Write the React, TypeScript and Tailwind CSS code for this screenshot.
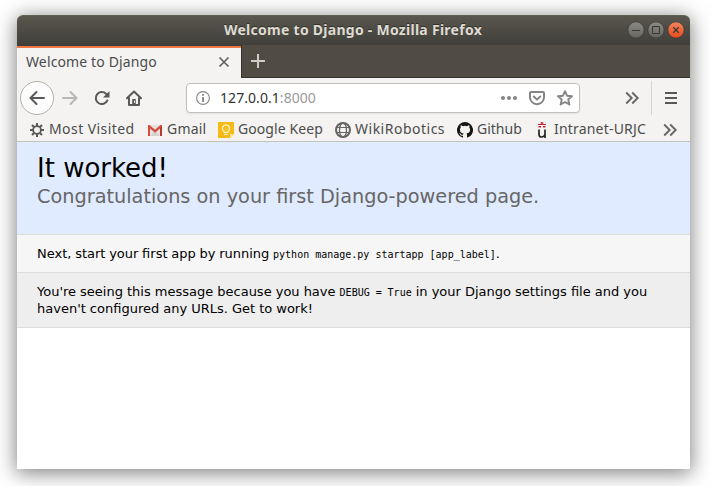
import React from "react";

function Icon({ size = 16, children }: { size?: number; children: React.ReactNode }) {
  return (
    <svg
      width={size}
      height={size}
      viewBox="0 0 16 16"
      fill="none"
      stroke="currentColor"
      strokeWidth="2"
      strokeLinecap="round"
      strokeLinejoin="round"
      className="block shrink-0"
    >
      {children}
    </svg>
  );
}

const Chevrons = () => (
  <Icon>
    <path d="M2.200 2.500 7.700 8l-5.500 5.500M8.200 2.500l5.500 5.500-5.500 5.500" stroke="#686765" strokeWidth="1.900" strokeLinecap="butt" strokeLinejoin="miter" />
  </Icon>
);

function TitleBar() {
  return (
    <div className="relative flex h-[30px] shrink-0 items-center justify-center rounded-t-[6px] border-t border-[#5f6154] bg-linear-to-b from-[#59574e] to-[#403f3a]">
      <span className="mr-[1px] mb-[2px] text-[14px] leading-5 font-bold tracking-[0.270px] whitespace-nowrap text-[#dfdbd2] [text-shadow:0_-1px_0_#302f2a]">
        Welcome to Django - Mozilla Firefox
      </span>
      <div className="absolute top-[6px] right-[6px] flex gap-[4px]">
        {[0, 1, 2].map((i) => (
          <svg key={i} width="16" height="16" viewBox="0 0 16 16" fill="none" stroke="#3a3934" className="overflow-visible">
            <defs>
              <linearGradient id={`control${i}`} x1="0" y1="0" x2="0" y2="1">
                <stop stopColor={i === 2 ? "#f48560" : "#8b8a84"} />
                <stop offset="1" stopColor={i === 2 ? "#e2491b" : "#65645e"} />
              </linearGradient>
            </defs>
            <circle cx="8" cy="8" r="8.200" fill={`url(#control${i})`} strokeWidth=".8" />
            {i === 0 && <path d="M4 8.500h8" />}
            {i === 1 && <path d="M4.500 4.500h7v7h-7z" />}
            {i === 2 && <path d="m5.300 5.300 5.400 5.400m0-5.400-5.400 5.400" strokeWidth="1.300" />}
          </svg>
        ))}
      </div>
    </div>
  );
}

function TabBar() {
  return (
    <div className="flex h-[33px] shrink-0 bg-[#504c44]">
      <div className="flex h-[33px] w-[224px] items-center justify-between border-t border-[#3c3b37] bg-[#f4f3f2] pr-[10px] pl-[9px] shadow-[inset_0_2px_0_#f07746]">
        <span className="text-[14px] leading-5 tracking-[0.130px] whitespace-nowrap text-[#4c4c4c]">Welcome to Django</span>
        <svg width="14" height="14" viewBox="0 0 14 14" fill="none" stroke="#62605d" strokeWidth="1.700">
          <path d="m2.500 2.500 9 9m0-9-9 9" />
        </svg>
      </div>
      <div className="flex flex-1 items-center border-b border-l border-[#34322d] pl-[9px]">
        <svg width="14" height="14" viewBox="0 0 14 14" stroke="#d0ccc5" strokeWidth="2">
          <path d="M7 0v14M0 7h14" />
        </svg>
      </div>
    </div>
  );
}

function NavBar() {
  return (
    <div className="flex h-[40px] shrink-0 items-center pl-[3px] text-[#5a5957]">
      <div className="flex size-[34px] shrink-0 items-center justify-center rounded-full border border-[#b3b0ac] bg-[#fdfdfd]">
        <Icon>
          <path d="M15 8H1.500M7.500 2 1.500 8l6 6" />
        </Icon>
      </div>
      <div className="ml-[8px] text-[#b8b7b5]">
        <Icon>
          <path d="M1 8h13.500M8.500 2l6 6-6 6" />
        </Icon>
      </div>
      <div className="ml-[16px]">
        <Icon>
          <path d="M13.300 10.500A6 6 0 1 1 12 3.800L14 5.700" />
          <path d="M15.500 1v6.500H9z" fill="currentColor" stroke="none" />
        </Icon>
      </div>
      <div className="ml-[16px]">
        <Icon>
          <path d="M1 8.300 8 1.500l7 6.800M3 8v7h10V8" />
          <path d="M6.200 14V9h3.600v5z" fill="currentColor" stroke="none" />
          <path d="M8.500 11v1.500" stroke="#f4f3f2" strokeWidth="1" />
        </Icon>
      </div>
      <div className="ml-[44px] flex h-[30px] w-[394px] shrink-0 items-center rounded-[4px] border border-[#c1bfbc] bg-white shadow-[0_1px_2px_#00000012]">
        <svg width="14" height="14" viewBox="0 0 14 14" fill="none" stroke="#858585" className="ml-[9px]">
          <circle cx="7" cy="7" r="6.400" strokeWidth="1.100" />
          <path d="M7 6v5M7 3v1.800" strokeWidth="1.800" />
        </svg>
        <span className="ml-[10px] text-[14px] leading-5 tracking-[0.060px] whitespace-nowrap text-[#9a9a9a]">
          <span className="text-[#333]">127.0.0.1</span>:8000
        </span>
        <div className="mr-[6px] ml-auto flex items-center gap-[12px] text-[#858585]">
          <Icon>
            <g fill="currentColor" stroke="none">
              <circle cx="2" cy="8" r="2" />
              <circle cx="8" cy="8" r="2" />
              <circle cx="14" cy="8" r="2" />
            </g>
          </Icon>
          <Icon>
            <path d="M2 2h12q1 0 1 1v4.200a7 7 0 0 1-14 0V3q0-1 1-1z" />
            <path d="M4.800 6.500 8 9.600l3.200-3.100" />
          </Icon>
          <Icon>
            <path d="m8 1.200 2 4.500 5 .5-3.800 3.300 1.200 5L8 12l-4.400 2.500 1.200-5L1 6.200l5-.5z" strokeWidth="1.900" />
          </Icon>
        </div>
      </div>
      <div className="ml-[44px]">
        <Chevrons />
      </div>
      <div className="ml-[11px] h-[34px] w-px bg-[#d7d5d2]" />
      <div className="ml-[11px]">
        <Icon>
          <path d="M2 3h12M2 8h12M2 13h12" strokeLinecap="butt" />
        </Icon>
      </div>
    </div>
  );
}

function Gear() {
  return (
    <svg width="14" height="14" viewBox="0 0 14 14" fill="none" stroke="#5a5957" className="block shrink-0">
      <circle cx="7" cy="7" r="3.900" strokeWidth="1.800" />
      <path
        d="M7 0v3M7 11v3M0 7h3M11 7h3M2 2l2 2M10 10l2 2M12 2l-2 2M4 10l-2 2"
        strokeWidth="2"
      />
    </svg>
  );
}

function GmailLogo() {
  return (
    <svg width="14" height="11" viewBox="0 0 14 11" className="mt-[1px] block shrink-0">
      <path d="M1 0h12v11H1z" fill="#e6e4e2" />
      <path d="M2 11 7 6l5 5z" fill="#d5d3d1" />
      <path d="M0 0v11h2V3.500l5 4.200 5-4.200V11h2V0h-1.500L7 4.700 1.500 0z" fill="#d54b3d" />
      <path d="M12 3.500V11h2V1z" fill="#b63a2f" />
    </svg>
  );
}

function KeepLogo() {
  return (
    <svg width="16" height="16" viewBox="0 0 16 16" fill="none" className="block shrink-0">
      <path d="M.500 0h15q.5 0 .5.500V12l-4 4H.500q-.5 0-.5-.5V.500q0-.5.500-.5z" fill="#f5ba15" />
      <path d="M12 16v-4h4z" fill="#fde293" />
      <path d="M6.300 9.800C3 7.500 4.500 2.900 8 2.900s5 4.600 1.700 6.900v.7H6.300zM6.300 12.300h3.400" stroke="#fff2c8" strokeWidth="1.200" />
      <path d="m6.500 6.500 1.500 1 1.500-1M8 7.500v3" stroke="#fbd76b" strokeWidth=".7" />
    </svg>
  );
}

function Globe() {
  return (
    <svg width="16" height="16" viewBox="0 0 16 16" fill="none" stroke="#656462" className="block shrink-0">
      <circle cx="8" cy="8" r="7" strokeWidth="2" />
      <ellipse cx="8" cy="8" rx="3.500" ry="7" strokeWidth="1.300" />
      <path d="M2 5.500h12M2 10.500h12" strokeWidth="1.200" />
    </svg>
  );
}

function GithubLogo() {
  return (
    <svg width="16" height="16" viewBox="0 0 16 16" fill="#161514" className="block shrink-0">
      <path d="M8 0a8 8 0 0 0-2.530 15.590c.4.070.550-.170.550-.380v-1.490c-2.230.480-2.700-.940-2.700-.940-.360-.930-.890-1.180-.890-1.180-.730-.5.060-.490.060-.490.800.060 1.230.830 1.230.830.720 1.220 1.870.870 2.330.660.070-.520.280-.870.510-1.070-1.780-.2-3.640-.890-3.640-3.950 0-.870.310-1.590.820-2.150-.080-.2-.360-1.020.080-2.120 0 0 .670-.210 2.200.820a7.600 7.600 0 0 1 4 0c1.530-1.040 2.200-.820 2.200-.820.440 1.100.160 1.920.080 2.120.510.560.820 1.270.820 2.150 0 3.070-1.870 3.750-3.650 3.950.290.250.540.730.540 1.480v2.200c0 .210.150.460.550.380A8 8 0 0 0 8 0z" />
    </svg>
  );
}

function UrjcLogo() {
  return (
    <svg width="10" height="16" viewBox="0 0 10 16" fill="none" className="block shrink-0">
      <path d="M5 0v3M3.500 1h3M1 2.500h8" stroke="#cf2034" strokeWidth="1.200" />
      <path d="M1.500 4.800h2.500M6 4.800h2.500" stroke="#cf2034" strokeWidth="1.600" />
      <path d="M2 7.500v4.700q0 2.800 2.500 2.800T8 12.500M8 7.500V16" stroke="#242424" strokeWidth="1.700" />
    </svg>
  );
}

function BookmarkText({ children, className }: { children: string; className: string }) {
  return <span className={`mb-[2px] block shrink-0 text-[14px] leading-5 whitespace-nowrap ${className}`}>{children}</span>;
}

function BookmarksBar() {
  return (
    <div className="flex h-[24px] shrink-0 items-center border-b border-[#c3c2c1] pl-[13px] text-[#4c4c4c]">
      <Gear />
      <BookmarkText className="ml-[5px] w-[99px] tracking-[0.420px]">Most Visited</BookmarkText>
      <GmailLogo />
      <BookmarkText className="ml-[5px] w-[51px] tracking-[0.200px]">Gmail</BookmarkText>
      <KeepLogo />
      <BookmarkText className="ml-[4px] w-[97px] tracking-[0.080px]">Google Keep</BookmarkText>
      <Globe />
      <BookmarkText className="ml-[4px] w-[102px] tracking-[0.500px]">WikiRobotics</BookmarkText>
      <GithubLogo />
      <BookmarkText className="ml-[4px] w-[60px] tracking-[0px]">Github</BookmarkText>
      <UrjcLogo />
      <BookmarkText className="ml-[7px] w-[108px] tracking-[0.190px]">Intranet-URJC</BookmarkText>
      <Chevrons />
    </div>
  );
}

function Page() {
  return (
    <div className="flex-1 bg-white font-['DejaVu_Sans',sans-serif] text-[13px] leading-[17px] text-black">
      <div className="h-[93px] border-b border-[#dddddd] bg-[#e0ebff] px-[20px] pt-[11px]">
        <h1 className="text-[26px] leading-[31px]">It worked!</h1>
        <h2 className="mt-[1px] text-[19.300px] leading-[24px] text-[#666]">Congratulations on your first Django-powered page.</h2>
      </div>
      <div className="h-[38px] border-b border-[#dddddd] bg-[#f6f6f6] px-[20px] pt-[10px]">
        <p className="[word-spacing:-0.400px]">
          Next, start your first app by running{" "}
          <code className="font-['DejaVu_Sans_Mono',monospace] text-[10px] leading-none [word-spacing:0px]">python manage.py startapp [app_label]</code>.
        </p>
      </div>
      <div className="h-[55px] border-b border-[#dddddd] bg-[#eeeeee] px-[20px] pt-[10px]">
        <p className="[word-spacing:-0.080px]">
          You're seeing this message because you have{" "}
          <code className="font-['DejaVu_Sans_Mono',monospace] text-[10px] leading-none">DEBUG = True</code> in your Django settings file and you
          <br />
          haven't configured any URLs. Get to work!
        </p>
      </div>
    </div>
  );
}

export default function App() {
  return (
    <div className="h-[486px] w-[710px] overflow-hidden bg-white pt-[15px] pl-[17px]">
      <div className="flex h-[454px] w-[673px] flex-col rounded-t-[6px] bg-[#f4f3f2] font-['Noto_Sans',sans-serif] shadow-[0_3px_20px_1px_#00000080]">
        <TitleBar />
        <TabBar />
        <NavBar />
        <BookmarksBar />
        <Page />
      </div>
    </div>
  );
}
